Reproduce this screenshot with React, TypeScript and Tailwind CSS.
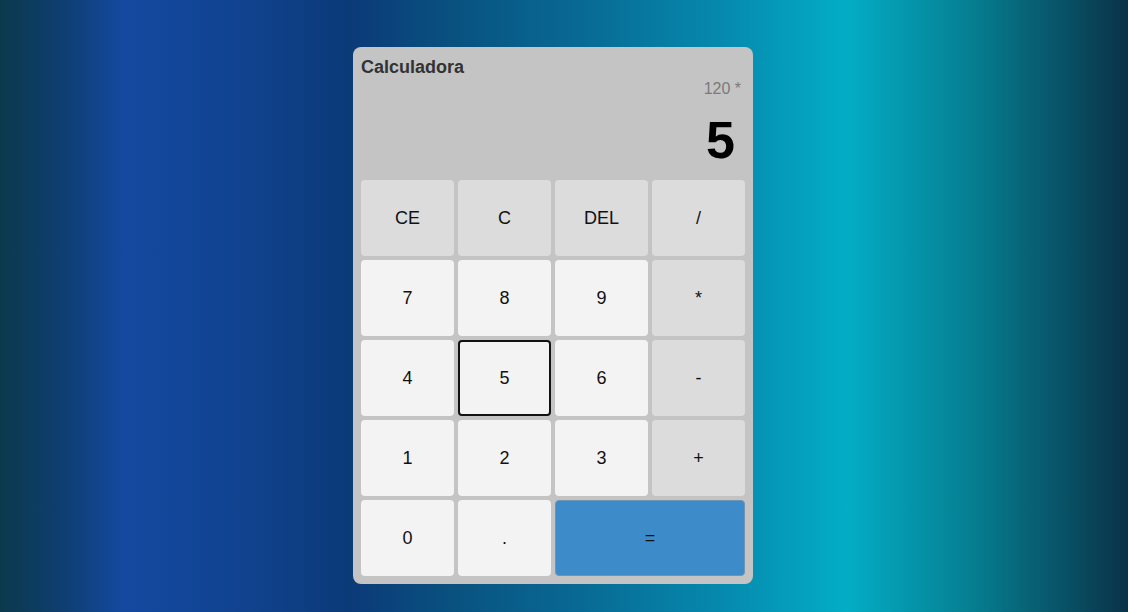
const Key = ({
  label,
  kind = "num",
  focused = false,
  wide = false,
}: {
  label: string;
  kind?: "num" | "op" | "eq";
  focused?: boolean;
  wide?: boolean;
}) => {
  const bg =
    kind === "eq"
      ? "bg-[#3e8bc9] border border-[#6f94b4]"
      : kind === "op"
      ? "bg-[#dcdcdc]"
      : "bg-[#f3f3f3]";
  return (
    <button
      className={`${bg} ${wide ? "col-span-2" : ""} ${
        focused ? "border-2 border-[#111]" : ""
      } flex items-center justify-center rounded-[4px] text-[18px] text-[#111]`}
    >
      {label}
    </button>
  );
};

export default function App() {
  return (
    <div
      className="w-full h-[612px] flex items-start justify-center pt-[47px] bg-[linear-gradient(to_right,#0b394c_0%,#0f3f74_6%,#1449a0_11%,#10428e_22%,#0b3a78_31%,#09517f_40%,#086b95_52%,#0689ae_64%,#03adc5_75%,#067f92_86%,#0a3248_100%)]"
      style={{ fontFamily: '"Liberation Sans", Arial, sans-serif' }}
    >
      <div className="w-[400px] h-[537px] mr-[22px] bg-[#c4c4c4] rounded-[8px] p-2 flex flex-col">
        <div className="flex flex-col h-[125px]">
          <div className="text-[18px] leading-[24px] font-bold text-[#333]">
            Calculadora
          </div>
          <div className="text-[16px] leading-[20px] text-[#7a7a7a] text-right pr-1">
            120 *
          </div>
          <div className="mt-[11px] text-[52px] leading-[60px] font-bold text-black text-right pr-[10px]">
            5
          </div>
        </div>
        <div className="grid grid-cols-4 grid-rows-[repeat(5,76px)] gap-x-1 gap-y-1">
          <Key label="CE" kind="op" />
          <Key label="C" kind="op" />
          <Key label="DEL" kind="op" />
          <Key label="/" kind="op" />
          <Key label="7" />
          <Key label="8" />
          <Key label="9" />
          <Key label="*" kind="op" />
          <Key label="4" />
          <Key label="5" focused />
          <Key label="6" />
          <Key label="-" kind="op" />
          <Key label="1" />
          <Key label="2" />
          <Key label="3" />
          <Key label="+" kind="op" />
          <Key label="0" />
          <Key label="." />
          <Key label="=" kind="eq" wide />
        </div>
      </div>
    </div>
  );
}
